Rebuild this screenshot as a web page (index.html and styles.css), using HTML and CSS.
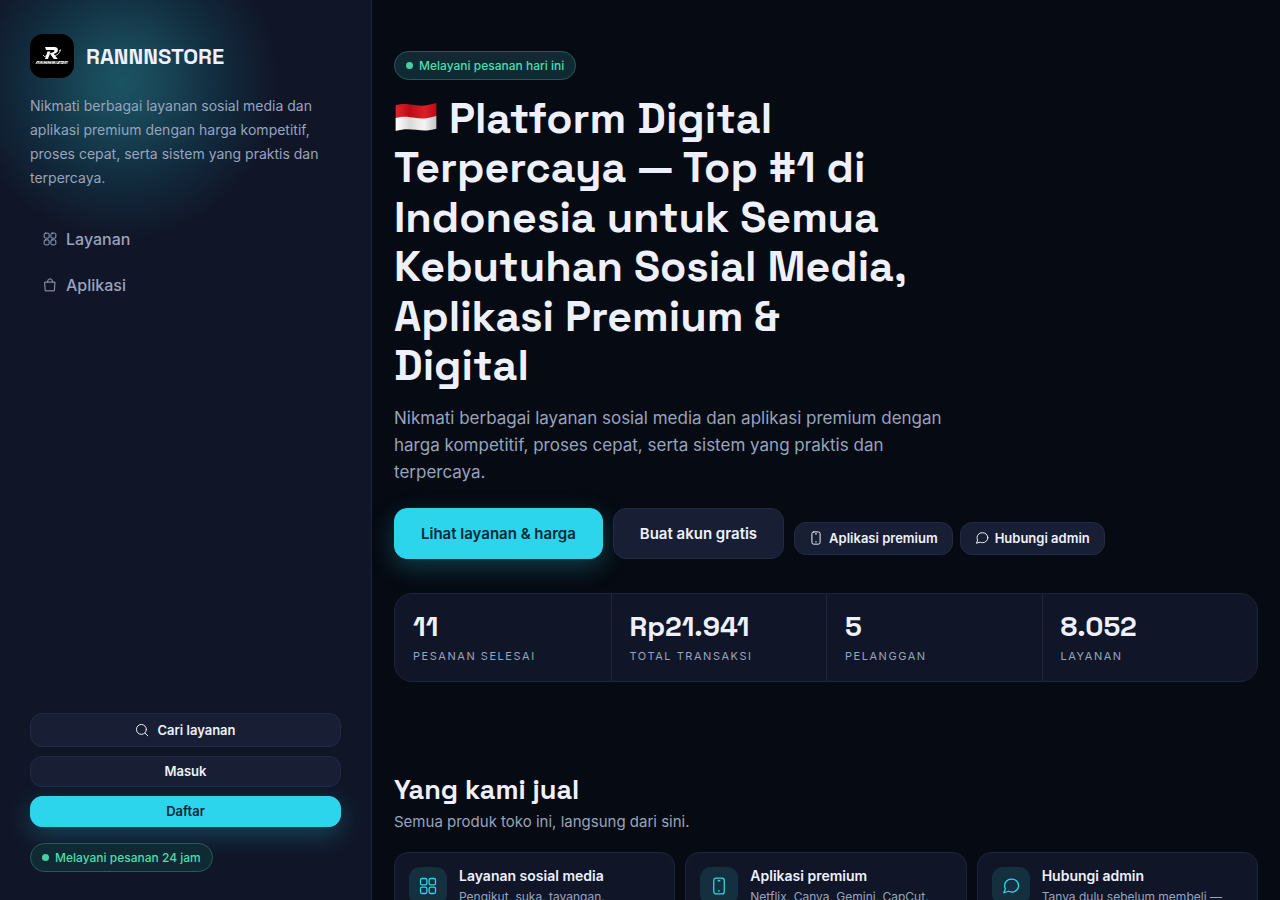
FILE: index.html
```html
<!DOCTYPE html>
<html lang="id">
    <head>
        <meta charset="UTF-8">
        <meta name="viewport" content="width=device-width, initial-scale=1">
        <title>RANNNSTORE</title>
        <link rel="stylesheet" href="styles.css">
    </head>
    <body>
        <svg class="sprite" aria-hidden="true">
            <symbol id="icon-grid" viewBox="0 0 24 24">
                <rect x="2" y="2" width="8.500" height="8.500" rx="2"/>
                <rect x="13.500" y="2" width="8.500" height="8.500" rx="2"/>
                <rect x="2" y="13.500" width="8.500" height="8.500" rx="2"/>
                <rect x="13.500" y="13.500" width="8.500" height="8.500" rx="2"/>
            </symbol>
            <symbol id="icon-bag" viewBox="0 0 24 24">
                <path d="M3.500 7h17l-1 15h-15z"/>
                <path d="M8 7V5.500a4 4 0 0 1 8 0V7"/>
            </symbol>
            <symbol id="icon-search" viewBox="0 0 24 24">
                <circle cx="11" cy="11" r="8.500"/>
                <path d="m17.500 17.500 4.500 4.500"/>
            </symbol>
            <symbol id="icon-phone" viewBox="0 0 24 24">
                <rect x="5" y="1.500" width="14" height="21" rx="3"/>
                <path d="M11 5h2M11.500 18.500h1"/>
            </symbol>
            <symbol id="icon-chat" viewBox="0 0 24 24">
                <path d="M22 11.500a8.500 8.500 0 0 1-9 8.500c-1.600 0-3-.3-4.300-1L2.500 21l2-5.500a8 8 0 0 1-1-4A8.500 8.500 0 0 1 12.500 3 8.500 8.500 0 0 1 22 11.500z"/>
            </symbol>
        </svg>
        <div class="layout">
            <aside class="sidebar">
                <a class="brand" href="#">
                    <svg class="brand-logo" viewBox="0 0 44 44" aria-hidden="true">
                        <rect width="44" height="44" fill="#000"/>
                        <path d="M15 13h9.500c4 0 4.500 4.500 1.500 6l-2.200 1 4 5h-4l-4-5.500 3.800-1.500c1.500-.8 1-2-.5-2h-7z" fill="#fff"/>
                        <path d="M17.500 17.500h3l-2.500 7.500h-3z" fill="#fff"/>
                        <path d="M13 21l1.500 1.500 5-1.500M25 21.500c3-.5 4.500-2.500 5.500-5.500M29 17l1.700-1.500" fill="none" stroke="#fff" stroke-width=".8"/>
                        <path d="M7 27h31.500l-1 3H5.500z" fill="#777"/>
                        <path d="M6 29.500l1-2h2l-.6 1.200M10 29.500l1.500-2 .6 2M14 29.500l.7-2 1.500 2 .7-2M18 29.500l.7-2 1.500 2 .7-2M22.500 29.500l.5-2 1 2 .5-2M27 29.500h1.500l.5-2h1.500M31 27.500h2.500l-.6 2h-1.500M35 29.500l.5-2h2" fill="none" stroke="#fff" stroke-width=".7"/>
                    </svg>
                    <span class="brand-name">RANNNSTORE</span>
                </a>
                <p class="sidebar-text">Nikmati berbagai layanan sosial media dan aplikasi premium dengan harga kompetitif, proses cepat, serta sistem yang praktis dan terpercaya.</p>
                <nav class="menu">
                    <a href="#layanan"><svg class="icon"><use href="#icon-grid"/></svg>Layanan</a>
                    <a href="#aplikasi"><svg class="icon"><use href="#icon-bag"/></svg>Aplikasi</a>
                </nav>
                <div class="sidebar-actions">
                    <button class="btn btn-small btn-search" type="button"><svg class="icon"><use href="#icon-search"/></svg>Cari layanan</button>
                    <a class="btn btn-small" href="#masuk">Masuk</a>
                    <a class="btn btn-small btn-primary" href="#daftar">Daftar</a>
                </div>
                <span class="pill">Melayani pesanan 24 jam</span>
            </aside>
            <main class="content">
                <section class="hero">
                    <span class="pill">Melayani pesanan hari ini</span>
                    <h1>
                        <svg class="flag" viewBox="0 0 40 28" role="img" aria-label="Indonesia">
                            <defs>
                                <linearGradient id="flag-red">
                                    <stop offset="0" stop-color="#e3222b"/>
                                    <stop offset=".35" stop-color="#b90c17"/>
                                    <stop offset=".7" stop-color="#e01d27"/>
                                    <stop offset="1" stop-color="#b50f19"/>
                                </linearGradient>
                                <linearGradient id="flag-white">
                                    <stop offset="0" stop-color="#fff"/>
                                    <stop offset=".35" stop-color="#d9d9d9"/>
                                    <stop offset=".7" stop-color="#f5f5f5"/>
                                    <stop offset="1" stop-color="#c4c4c4"/>
                                </linearGradient>
                            </defs>
                            <path d="M1 3c7-2 12-1 19 0s12 0 19-2v14c-7 2-12 3-19 2S8 14 1 16z" fill="url(#flag-red)"/>
                            <path d="M1 15c7-2 12-1 19 0s12 0 19-2v12c-7 2-12 2-19 1S8 25 1 27z" fill="url(#flag-white)"/>
                        </svg>
                        Platform Digital Terpercaya — Top #1 di Indonesia untuk Semua Kebutuhan Sosial Media, Aplikasi Premium &amp; Digital
                    </h1>
                    <p class="lead">Nikmati berbagai layanan sosial media dan aplikasi premium dengan harga kompetitif, proses cepat, serta sistem yang praktis dan terpercaya.</p>
                    <div class="hero-actions">
                        <a class="btn btn-primary" href="#layanan">Lihat layanan &amp; harga</a>
                        <a class="btn" href="#daftar">Buat akun gratis</a>
                        <div class="hero-links">
                            <a class="btn btn-small" href="#aplikasi"><svg class="icon"><use href="#icon-phone"/></svg>Aplikasi premium</a>
                            <a class="btn btn-small" href="#kontak"><svg class="icon"><use href="#icon-chat"/></svg>Hubungi admin</a>
                        </div>
                    </div>
                </section>
                <dl class="stats">
                    <div><dt>Pesanan selesai</dt><dd>11</dd></div>
                    <div><dt>Total transaksi</dt><dd>Rp21.941</dd></div>
                    <div><dt>Pelanggan</dt><dd>5</dd></div>
                    <div><dt>Layanan</dt><dd>8.052</dd></div>
                </dl>
                <section class="products">
                    <h2>Yang kami jual</h2>
                    <p class="products-text">Semua produk toko ini, langsung dari sini.</p>
                    <div class="cards">
                        <a class="card" href="#layanan">
                            <span class="card-icon"><svg class="icon"><use href="#icon-grid"/></svg></span>
                            <div>
                                <h3>Layanan sosial media</h3>
                                <p>Pengikut, suka, tayangan.</p>
                            </div>
                        </a>
                        <a class="card" href="#aplikasi">
                            <span class="card-icon"><svg class="icon"><use href="#icon-phone"/></svg></span>
                            <div>
                                <h3>Aplikasi premium</h3>
                                <p>Netflix, Canva, Gemini, CapCut.</p>
                            </div>
                        </a>
                        <a class="card" href="#kontak">
                            <span class="card-icon"><svg class="icon"><use href="#icon-chat"/></svg></span>
                            <div>
                                <h3>Hubungi admin</h3>
                                <p>Tanya dulu sebelum membeli —</p>
                            </div>
                        </a>
                    </div>
                </section>
            </main>
        </div>
    </body>
</html>
```
FILE: styles.css
```css
* {
    box-sizing: border-box;
}
body {
    margin: 0;
    background: #060a12;
    color: #eef1fc;
    font-family: Inter, "Liberation Sans", sans-serif;
}
h1, h2, h3, p, dl, dd {
    margin: 0;
}
h1, h2, .brand-name, .stats dd {
    font-family: "Space Grotesk", Inter, sans-serif;
    font-weight: 700;
}
a {
    color: inherit;
    text-decoration: none;
}
.sprite {
    display: none;
}
.icon {
    width: 14px;
    height: 14px;
    flex: none;
    fill: none;
    stroke: currentColor;
    stroke-width: 1.7;
    stroke-linecap: round;
    stroke-linejoin: round;
}
.layout {
    display: grid;
    grid-template-columns: 372px 1fr;
}

/* sidebar */
.sidebar {
    position: sticky;
    top: 0;
    height: 100vh;
    display: flex;
    flex-direction: column;
    align-items: flex-start;
    padding: 34px 30px 28px;
    border-right: 1px solid #1c2438;
    background: radial-gradient(circle 156px at 122px 82px, #1a5363, #194a5a 20%, #112a3c 65%, #101628) #101628;
}
.brand {
    display: flex;
    align-items: center;
    gap: 12px;
}
.brand-logo {
    width: 44px;
    height: 44px;
    border-radius: 13px;
}
.brand-name {
    font-size: 22px;
}
.sidebar-text {
    margin-top: 16px;
    color: #98a3bd;
    font-size: 14px;
    line-height: 24px;
}
.menu {
    display: grid;
    gap: 4px;
    margin-top: 28px;
}
.menu a {
    display: flex;
    align-items: center;
    gap: 9px;
    padding: 9px 13px;
    color: #98a3bd;
    font-size: 16px;
    font-weight: 500;
    line-height: 24px;
}
.sidebar-actions {
    display: grid;
    gap: 9px;
    width: 100%;
    margin-top: auto;
    margin-bottom: 16px;
}
.pill {
    display: inline-flex;
    align-items: center;
    gap: 6px;
    padding: 5px 11px;
    border: 1px solid #245c58;
    border-radius: 99px;
    background: #0f2a32;
    color: #4bdcb0;
    font-size: 12px;
    font-weight: 500;
    line-height: 17px;
}
.pill::before {
    content: "";
    width: 7px;
    height: 7px;
    border-radius: 50%;
    background: #46cfa6;
}

/* buttons */
.btn {
    display: inline-flex;
    align-items: center;
    justify-content: center;
    padding: 12px 26px;
    border: 1px solid #222b43;
    border-radius: 13px;
    background: #181f35;
    color: #eef1fc;
    font-family: inherit;
    font-size: 15px;
    font-weight: 600;
    line-height: 25px;
}
.btn-small {
    gap: 8px;
    padding: 6px 14px;
    border-radius: 12px;
    font-size: 13px;
    line-height: 17px;
}
.btn-search {
    padding: 7px 14px;
    line-height: 18px;
}
.btn-primary {
    border-color: #2cd5ec;
    background: #2cd5ec;
    color: #062a35;
    box-shadow: 0 8px 24px rgba(44, 213, 236, .25);
}

/* content */
.content {
    padding: 51px 22px 60px;
}
.hero h1 {
    max-width: 530px;
    margin-top: 14px;
    font-size: 43px;
    line-height: 1.15;
}
.flag {
    width: 44px;
    height: 30px;
    vertical-align: 1px;
}
.lead {
    max-width: 560px;
    margin-top: 14px;
    color: #98a3bd;
    font-size: 17px;
    line-height: 27px;
}
.hero-actions {
    display: flex;
    flex-wrap: wrap;
    align-items: flex-end;
    gap: 10px;
    margin-top: 22px;
}
.hero-links {
    display: flex;
    gap: 7px;
    padding-bottom: 4px;
}
.hero-links .btn {
    gap: 6px;
    padding: 7px 14px;
}
.stats {
    display: grid;
    grid-template-columns: repeat(4, 1fr);
    margin-top: 34px;
    border: 1px solid #1c253b;
    border-radius: 18px;
    background: #101628;
}
.stats div {
    display: flex;
    flex-direction: column-reverse;
    gap: 4px;
    padding: 16px 18px;
}
.stats div + div {
    border-left: 1px solid #1c253b;
}
.stats dt {
    color: #98a3bd;
    font-size: 11px;
    line-height: 18px;
    letter-spacing: .14em;
    text-transform: uppercase;
}
.stats dd {
    font-size: 28px;
    line-height: 33px;
}
.products {
    margin-top: 90px;
}
.products h2 {
    font-size: 27px;
    line-height: 36px;
}
.products-text {
    margin-top: 2px;
    color: #98a3bd;
    font-size: 15px;
    line-height: 24px;
}
.cards {
    display: grid;
    grid-template-columns: repeat(3, 1fr);
    gap: 10px;
    margin-top: 18px;
}
.card {
    display: flex;
    gap: 12px;
    padding: 14px;
    border: 1px solid #1c253b;
    border-radius: 14px;
    background: #101628;
}
.card-icon {
    display: grid;
    place-items: center;
    flex: none;
    width: 38px;
    height: 38px;
    border-radius: 11px;
    background: #14303f;
    color: #2cd5ec;
}
.card-icon .icon {
    width: 18px;
    height: 18px;
}
.card h3 {
    font-size: 14px;
    font-weight: 600;
    line-height: 18px;
}
.card p {
    margin-top: 3px;
    color: #98a3bd;
    font-size: 12px;
    line-height: 18px;
}
```
